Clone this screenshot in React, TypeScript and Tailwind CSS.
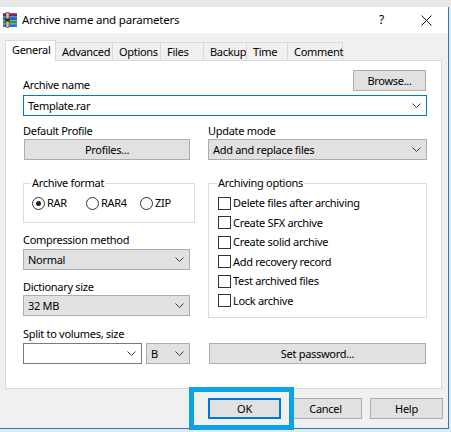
import React from 'react';

const Chevron = () => (
  <svg width="9" height="5" viewBox="0 0 9 5" className="shrink-0">
    <path d="M0.5 0.5 L4.5 4.5 L8.5 0.5" stroke="#3c3c3c" strokeWidth="1" fill="none" />
  </svg>
);

const RarIcon = () => (
  <svg width="16" height="16" viewBox="0 0 16 16" className="shrink-0">
    <rect x="1" y="1" width="14" height="3.5" fill="#7a2566" />
    <rect x="1" y="1" width="14" height="1" fill="#b04a98" />
    <rect x="1" y="4.5" width="14" height="3.5" fill="#2d5fc2" />
    <rect x="1" y="4.5" width="14" height="1" fill="#5f8de0" />
    <rect x="1" y="8" width="14" height="3.5" fill="#2e9a3b" />
    <rect x="1" y="8" width="14" height="1" fill="#63c56c" />
    <rect x="1" y="11.5" width="14" height="3.5" fill="#3a6fd1" />
    <rect x="1" y="11.5" width="14" height="1" fill="#79a1ea" />
    <rect x="4" y="0.5" width="3" height="15" fill="#d9c7a0" />
    <rect x="4" y="0.5" width="3" height="15" fill="none" stroke="#4a3a28" strokeWidth="0.6" />
    <rect x="3.5" y="6.5" width="4" height="3" fill="#2b2b2b" />
  </svg>
);

const Button = ({ label, className = '' }: { label: string; className?: string }) => (
  <div
    className={`h-[21px] flex items-center justify-center bg-[#e1e1e1] border border-[#adadad] leading-[16px] ${className}`}
  >
    {label}
  </div>
);

const Select = ({ value, className = '' }: { value: string; className?: string }) => (
  <div
    className={`h-[21px] flex items-center justify-between pl-[4px] pr-[5px] bg-[#e1e1e1] border border-[#adadad] leading-[16px] ${className}`}
  >
    <span>{value}</span>
    <Chevron />
  </div>
);

const Radio = ({ label, checked }: { label: string; checked?: boolean }) => (
  <div className="w-[54px] flex items-center gap-[2px]">
    <span className="w-[13px] h-[13px] rounded-full border border-[#333] bg-white flex items-center justify-center">
      {checked && <span className="w-[5px] h-[5px] rounded-full bg-[#222]" />}
    </span>
    <span className="leading-[16px]">{label}</span>
  </div>
);

const Check = ({ label }: { label: string }) => (
  <div className="h-[19.5px] flex items-center gap-[2px]">
    <span className="w-[13px] h-[13px] border border-[#333] bg-white" />
    <span className="leading-[16px]">{label}</span>
  </div>
);

const tabs = [
  { name: 'Advanced', w: 'w-[58px]' },
  { name: 'Options', w: 'w-[49px]' },
  { name: 'Files', w: 'w-[44px]' },
  { name: 'Backup', w: 'w-[44px]' },
  { name: 'Time', w: 'w-[42px]' },
  { name: 'Comment', w: 'w-[56px]' },
];

const options = [
  'Delete files after archiving',
  'Create SFX archive',
  'Create solid archive',
  'Add recovery record',
  'Test archived files',
  'Lock archive',
];

export default function App() {
  return (
    <div className="relative w-[451px] h-[432px] overflow-hidden bg-[#e8e8e8] text-[11px] tracking-[-0.3px] text-black font-['Noto_Sans',sans-serif]">
      <div className="mt-[7px] w-[449px] h-[422px] flex flex-col bg-[#f0f0f0] border-r border-b border-[#1a7fd4]">
        {/* title bar */}
        <div className="h-[26px] shrink-0 flex items-center bg-white">
          <div className="ml-[2px]">
            <RarIcon />
          </div>
          <span className="ml-[4px] leading-[16px] text-[11.5px] tracking-[-0.2px]">Archive name and parameters</span>
          <span className="ml-auto text-[12px] leading-[16px] mr-[37px]">?</span>
          <svg width="11" height="11" viewBox="0 0 11 11" className="mr-[16px]">
            <path d="M0.5 0.5 L10.5 10.5 M10.5 0.5 L0.5 10.5" stroke="#111" strokeWidth="1" />
          </svg>
        </div>

        <div className="flex-1 px-[5px] pt-[7px]">
          {/* tabs */}
          <div className="h-[20px] flex items-end">
            <div className="relative z-10 w-[51px] h-[21px] -mb-[1px] bg-white border border-b-0 border-[#d9d9d9] pl-[6px] leading-[16px] pt-[1px]">
              General
            </div>
            {tabs.map((t) => (
              <div
                key={t.name}
                className={`${t.w} h-[18px] -ml-[1px] first:ml-0 border border-b-0 border-[#d9d9d9] bg-[#f0f0f0] pl-[6px] leading-[16px] pt-[1px]`}
              >
                {t.name}
              </div>
            ))}
          </div>

          {/* panel */}
          <div className="w-[437px] h-[329px] bg-white border border-[#d9d9d9] pl-[17px] pt-[9px]">
            <div className="w-[404px] flex justify-between items-start">
              <span className="mt-[7px] leading-[16px]">Archive name</span>
              <Button label="Browse..." className="w-[73px] mr-[1px]" />
            </div>
            <div className="mt-[2px] w-[404px] h-[21px] flex items-center justify-between pl-[4px] pr-[5px] bg-white border border-[#0078d7]">
              <span className="leading-[16px]">Template.rar</span>
              <Chevron />
            </div>

            <div className="mt-[7px] flex gap-[18px]">
              {/* left column */}
              <div className="w-[167px] flex flex-col">
                <span className="leading-[16px]">Default Profile</span>
                <Button label="Profiles..." className="ml-[1px] w-[166px]" />
                <fieldset className="mt-[15px] h-[48px] border border-[#dcdcdc]">
                  <legend className="ml-[7px] px-[1px] leading-[16px]">Archive format</legend>
                  <div className="mt-[4px] pl-[8px] flex">
                    <Radio label="RAR" checked />
                    <Radio label="RAR4" />
                    <Radio label="ZIP" />
                  </div>
                </fieldset>
                <span className="mt-[9px] leading-[16px]">Compression method</span>
                <Select value="Normal" className="mt-[1px]" />
                <span className="mt-[9px] leading-[16px]">Dictionary size</span>
                <Select value="32 MB" />
                <span className="mt-[10px] leading-[16px]">Split to volumes, size</span>
                <div className="mt-[1px] flex gap-[4px]">
                  <div className="w-[119px] h-[21px] flex items-center justify-end pr-[5px] bg-white border border-[#7a7a7a]">
                    <Chevron />
                  </div>
                  <Select value="B" className="w-[44px]" />
                </div>
              </div>

              {/* right column */}
              <div className="w-[219px] flex flex-col">
                <span className="leading-[16px]">Update mode</span>
                <Select value="Add and replace files" />
                <fieldset className="mt-[15px] h-[143px] border border-[#dcdcdc]">
                  <legend className="ml-[8px] px-[1px] leading-[16px]">Archiving options</legend>
                  <div className="pt-[2.5px] pl-[9px] flex flex-col">
                    {options.map((o) => (
                      <Check key={o} label={o} />
                    ))}
                  </div>
                </fieldset>
                <Button label="Set password..." className="mt-[25px] ml-[1px] w-[217px]" />
              </div>
            </div>
          </div>

          {/* dialog buttons */}
          <div className="mt-[9px] ml-[203px] flex gap-[8px]">
            <div className="w-[73px] h-[21px] flex items-center justify-center bg-[#e1e1e1] border-2 border-[#0078d7] leading-[16px]">
              OK
            </div>
            <Button label="Cancel" className="w-[73px]" />
            <Button label="Help" className="w-[73px]" />
          </div>
        </div>
      </div>

      {/* highlight annotation */}
      <div className="absolute left-[189px] top-[387px] w-[105px] h-[43px] border-[5px] border-[#0aa2e9]" />
    </div>
  );
}
